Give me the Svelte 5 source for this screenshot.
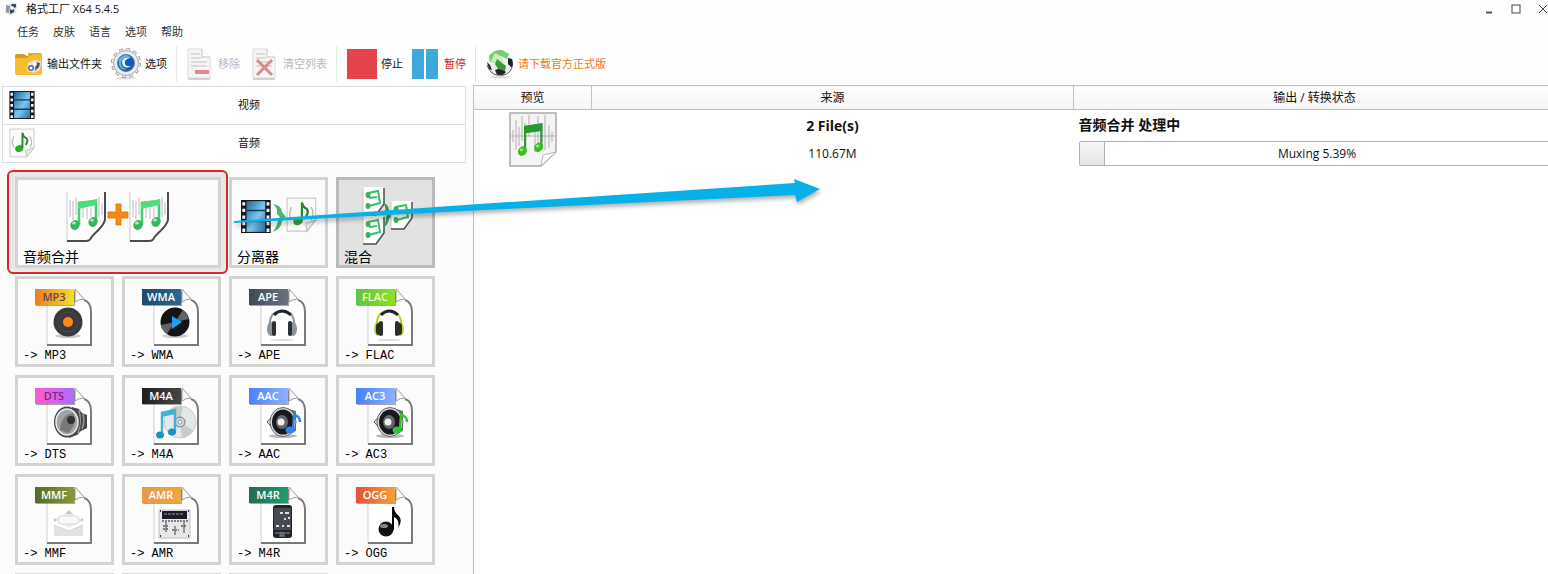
<script lang="ts">
  type Format = { name: string; from: string; to: string; ink?: string };

  const menus = ['任务', '皮肤', '语言', '选项', '帮助'];

  const formats: Format[] = [
    { name: 'MP3', from: '#f07a22', to: '#f6e024', ink: '#69405c' },
    { name: 'WMA', from: '#1c4a70', to: '#2c678f' },
    { name: 'APE', from: '#414958', to: '#68717f' },
    { name: 'FLAC', from: '#5cc646', to: '#8fe01e', ink: '#e6ffc8' },
    { name: 'DTS', from: '#ff5ccb', to: '#ad6cff', ink: '#8a1c8c' },
    { name: 'M4A', from: '#1f1f1f', to: '#464646' },
    { name: 'AAC', from: '#4582ff', to: '#8cb2ff' },
    { name: 'AC3', from: '#4582ff', to: '#8cb2ff' },
    { name: 'MMF', from: '#566a2c', to: '#869c30' },
    { name: 'AMR', from: '#e39a4a', to: '#f0a540' },
    { name: 'M4R', from: '#226b54', to: '#249a70' },
    { name: 'OGG', from: '#e5503a', to: '#f2a034' }
  ];

  let progress = 5.39;
</script>

{#snippet note(color: string, dark: string)}
  <path d="M9 23V5L27 3V20" fill="none" stroke={color} stroke-width="2.4" />
  <path d="M8 4L28 2V8L8 10Z" fill={color} />
  <ellipse cx="6" cy="24" rx="5" ry="3.6" fill={dark} transform="rotate(-20 6 24)" />
  <ellipse cx="24" cy="21" rx="5" ry="3.6" fill={dark} transform="rotate(-20 24 21)" />
  <ellipse cx="5" cy="23" rx="2" ry="1.2" fill="#fff" opacity="0.5" />
  <ellipse cx="23" cy="20" rx="2" ry="1.2" fill="#fff" opacity="0.5" />
{/snippet}

{#snippet sheet()}
  <path d="M1 0H39V31L25 51H1Z" fill="#fff" />
  <path d="M1 1V50" stroke="#c9c9c9" />
  <path d="M39 1V29C37 37 28 42 25 47C24 50 22 50 20 50H1" fill="none" stroke="#4c4c4c" stroke-width="2" />
  <path d="M4 9V26M7 10V29M10 6V24M17 17V27M21 17V28M25 17V26M33 6V26M36 12V24" stroke="#bdb6bf" />
  <path d="M13 34V12L30 10V31" fill="none" stroke="#43cd73" stroke-width="2.600" />
  <path d="M12 12L31 8V14L12 18Z" fill="#4fdc80" />
  <ellipse cx="9" cy="34" rx="4.500" ry="5" fill="#35b55f" transform="rotate(30 9 34)" />
  <ellipse cx="27" cy="31" rx="4.500" ry="5" fill="#35b55f" transform="rotate(30 27 31)" />
  <ellipse cx="8" cy="32" rx="2" ry="1.500" fill="#9ff0bb" />
  <ellipse cx="26" cy="29" rx="2" ry="1.500" fill="#9ff0bb" />
{/snippet}

{#snippet miniSheet()}
  <path d="M0 0H21V17L13 28H0Z" fill="#fff" />
  <path d="M21 1V17L13 28H0" fill="none" stroke="#4c4c4c" stroke-width="1.500" />
  <path d="M0 1V27" stroke="#c9c9c9" />
  <path d="M5 6L15 4L17 16L6 19M6 11L14 10" fill="none" stroke="#3abf67" stroke-width="2" />
  <ellipse cx="5" cy="19" rx="2.500" ry="3" fill="#35b55f" />
  <ellipse cx="5" cy="8" rx="2.500" ry="3" fill="#35b55f" />
{/snippet}

{#snippet film()}
  <rect width="27" height="30" fill="#15191e" />
  <rect x="5" y="1" width="17" height="28" fill="url(#filmBlue)" />
  <path d="M5 9.500H22M5 19.500H22" stroke="#123b5a" stroke-width="1.500" />
  <path d="M2.500 2V30M24.500 2V30" stroke="#f4f4f4" stroke-width="2.600" stroke-dasharray="3 3" />
{/snippet}

{#snippet noteSheet()}
  <path d="M1 1H27V21L19 31H1Z" fill="#fafafa" stroke="#c9c9c9" />
  <path d="M27 21L19 31L18 24Z" fill="#e9e9e9" stroke="#bdbdbd" />
  <path d="M5 9Q2 15 5 21M23 9Q26 15 23 21" fill="none" stroke="#aaa" />
  <ellipse cx="11" cy="22" rx="4.500" ry="3.500" fill="#2faa2d" transform="rotate(-20 11 22)" />
  <path d="M14.500 21V5Q15 9 19 11Q21 14 18 18" fill="none" stroke="#27842a" stroke-width="2" />
{/snippet}

{#snippet speaker(color: string)}
  <ellipse cx="35" cy="50" rx="14" ry="2" fill="#bbb" />
  <path d="M38 22L48 25V45L38 49Z" fill="#6d7277" />
  <path d="M19 36L30 24V48Z" fill="#e2e3e5" stroke="#333" stroke-width="0.800" />
  <ellipse cx="35" cy="36" rx="12" ry="13.500" fill="#17191c" stroke="#d6d8da" stroke-width="2" />
  <ellipse cx="35" cy="36" rx="13" ry="14.500" fill="none" stroke="#4a4d50" stroke-width="0.800" />
  <ellipse cx="34" cy="36" rx="6" ry="7" fill="#63676b" />
  <circle cx="33" cy="36" r="3.500" fill="#f0f0f0" />
  <path d="M45 43L46 29Q52 30 52 36" fill="none" stroke={color} stroke-width="2.400" />
  <ellipse cx="42" cy="44" rx="4.500" ry="3.500" fill={color} />
{/snippet}

{#snippet remover(clear: boolean)}
  <svg width="25" height="32" viewBox="0 0 25 32" aria-hidden="true">
    <path d="M1 1H15L23 9V30H1Z" fill="#f5f5f5" stroke="#dcdcdc" />
    <path d="M15 1V9H23" fill="#fff" stroke="#c3c3c3" />
    <path d="M4 6H13M4 10H14M4 14H20M4 18H20" stroke="#d2d2d2" stroke-width="1.500" />
    {#if clear}
      <path d="M5 12L20 27M20 12L5 27" stroke="#d98a8d" stroke-width="3" />
    {:else}
      <rect x="8" y="22" width="14" height="4" fill="#e08a8e" />
    {/if}
    <path d="M1 31H23" stroke="#aaa" />
  </svg>
{/snippet}

{#snippet art(name: string)}
  {#if name === 'MP3'}
    <ellipse cx="34" cy="49" rx="13" ry="2" fill="#ccc" />
    <circle cx="34" cy="35" r="14.500" fill="#3a3a3e" />
    <circle cx="34" cy="35" r="10" fill="none" stroke="#4b4b50" />
    <circle cx="34" cy="35" r="5" fill="#ff8a1c" />
  {:else if name === 'WMA'}
    <ellipse cx="34" cy="49" rx="13" ry="2" fill="#ccc" />
    <circle cx="34" cy="35" r="14.500" fill="#131416" />
    <path d="M34 35L42 23A14.500 14.500 0 0 1 48 32ZM34 35L26 47A14.500 14.500 0 0 1 20 38Z" fill="#8b8f94" opacity="0.650" />
    <path d="M31 29L41 35L31 42Z" fill="#1e9ff2" />
  {:else if name === 'APE' || name === 'FLAC'}
    {@const rim = name === 'APE' ? '#8d949b' : '#b7d431'}
    <ellipse cx="34" cy="53" rx="12" ry="1" fill="#ddd" />
    <path d="M22 42Q20 24 34 24Q48 24 46 42" fill="none" stroke={rim} stroke-width="2" />
    <path d="M26 28Q34 20 43 28" fill="none" stroke="#202428" stroke-width="3" />
    <ellipse cx="23" cy="42" rx="4" ry="7" fill={rim} />
    <ellipse cx="45" cy="42" rx="4" ry="7" fill={rim} />
    <rect x="24" y="34" width="4" height="15" rx="2" fill="#2b3035" />
    <rect x="40" y="34" width="4" height="15" rx="2" fill="#2b3035" />
    {#if name === 'FLAC'}
      <rect x="21" y="36" width="6" height="12" rx="3" fill="#283028" />
      <rect x="41" y="36" width="6" height="12" rx="3" fill="#283028" />
    {/if}
  {:else if name === 'DTS'}
    <path d="M38 21L45 23L48 27L53 29V42L47 45L43 49L35 52Z" fill="#45484b" />
    <path d="M45 24Q48 35 44 47M49 28Q51 36 48 43" fill="none" stroke="#999" stroke-width="1.500" />
    <ellipse cx="33" cy="36" rx="13" ry="15.500" fill="#44474a" />
    <ellipse cx="33" cy="36" rx="11" ry="13" fill="#a2a3a4" stroke="#ececec" stroke-width="1.500" />
    <path d="M26 44Q27 29 39 27Q44 38 34 47Z" fill="#77797b" />
    <circle cx="37" cy="34" r="4" fill="#303234" />
  {:else if name === 'M4A'}
    <circle cx="39" cy="36" r="16" fill="#e5e8e8" stroke="#c6caca" />
    <path d="M39 36L30 23A16 16 0 0 1 42 20ZM39 36L52 44A16 16 0 0 1 41 52Z" fill="#c8cdcc" />
    <circle cx="39" cy="36" r="5" fill="#d4d4d4" stroke="#777" />
    <circle cx="39" cy="36" r="2" fill="#fff" stroke="#999" />
    <path d="M21 48V27L34 24V45" fill="none" stroke="#3fb2d8" stroke-width="2.500" />
    <path d="M20 26L35 23V28L20 31Z" fill="#3fb2d8" />
    <ellipse cx="19" cy="49" rx="4" ry="3.500" fill="#1593c1" />
    <ellipse cx="31" cy="46" rx="4" ry="3.500" fill="#1593c1" />
  {:else if name === 'AAC'}
    {@render speaker('#2b86e8')}
  {:else if name === 'AC3'}
    {@render speaker('#31c72f')}
  {:else if name === 'MMF'}
    <path d="M20 40V51H49V40L35 46Z" fill="#e2e2e2" />
    <path d="M20 35L35 27L49 35L35 43Z" fill="#ededed" />
    <rect x="24" y="31" width="21" height="8" rx="3" fill="#f8f8f8" stroke="#d7d7d7" />
    <path d="M31 29L35 25L39 29M20 33V37L23 35ZM49 33V37L46 35Z" fill="#c5c5c5" />
    <path d="M20 40L35 46L49 40" fill="none" stroke="#d2d2d2" />
  {:else if name === 'AMR'}
    <rect x="18" y="25" width="31" height="28" fill="#e6e7e9" stroke="#c0c0c2" />
    <rect x="21" y="26" width="25" height="8" fill="#1e1926" />
    <path d="M23 29H43" stroke="#9a97a5" stroke-dasharray="3 1" />
    <path d="M25 37V47M34 41V50M43 37V48" stroke="#77797d" stroke-width="1.500" />
    <path d="M22 41H28M22 44H28M31 45H38M40 41H46M21 36H47" stroke="#5b5d62" stroke-width="1.500" stroke-dasharray="2 1" />
    <path d="M19 26H20M47 26H48M19 51H20M47 51H48" stroke="#333" stroke-width="2" />
  {:else if name === 'M4R'}
    <rect x="25" y="20" width="19" height="33" rx="3" fill="#202327" />
    <rect x="26" y="23" width="17" height="22" fill="#464b51" />
    <path d="M32 28H35M37 28H41M36 34H38M40 33H42M28 41H31M34 41H36M39 41H42" stroke="#d8dde0" stroke-width="2" />
    <path d="M27 48H42M31 51H37" stroke="#8d9195" />
    <circle cx="34" cy="49" r="2" fill="#565a60" stroke="#aaa" stroke-width="0.500" />
  {:else}
    <circle cx="31" cy="44" r="7.500" fill="#111" />
    <ellipse cx="29" cy="41" rx="4" ry="2" fill="#888" />
    <path d="M37 45V22H39Q39 27 44 31Q48 36 43 43Q45 35 39 32V45Z" fill="#080808" />
  {/if}
{/snippet}

<svg class="defs" aria-hidden="true">
  <defs>
    <linearGradient id="filmBlue" x1="0" x2="1" y1="0" y2="1">
      <stop offset="0" stop-color="#1f6898" />
      <stop offset="0.550" stop-color="#7bc7ef" />
      <stop offset="1" stop-color="#286e9e" />
    </linearGradient>
  </defs>
</svg>

<div class="window">
  <header class="titlebar">
    <svg width="14" height="14" viewBox="0 0 14 14" aria-hidden="true">
      <path d="M2 3L9 1L13 2L12 11L6 13L1 11Z" fill="#dce1e7" />
      <path d="M2 3L6 4L5 11L2 10Z" fill="#8a98a8" />
      <path d="M8 2H12V5L10 6V10L6 12V6Z" fill="#36475a" />
      <circle cx="8" cy="6" r="2" fill="#fff" />
    </svg>
    <h1>格式工厂 X64 5.4.5</h1>
    <div class="controls">
      <button aria-label="最小化"><svg width="10" height="10"><path d="M2 8.500H8" stroke="#555" stroke-width="2" /></svg></button>
      <button aria-label="最大化"><svg width="10" height="10"><rect x="1" y="1" width="8" height="8" fill="none" stroke="#444" /></svg></button>
      <button aria-label="关闭"><svg width="10" height="10"><path d="M1 1L9 9M9 1L1 9" stroke="#444" /></svg></button>
    </div>
  </header>

  <nav class="menubar">
    {#each menus as menu}
      <button>{menu}</button>
    {/each}
  </nav>

  <div class="toolbar">
    <button>
      <svg width="28" height="26" viewBox="0 0 28 26" aria-hidden="true">
        <path d="M0 5Q0 3 2 3H9L12 5H24V9H0Z" fill="#d99b1d" />
        <path d="M13 2H25Q27 2 27 4V10H13Z" fill="#eda91f" />
        <path d="M0 7H12L17 4H27V22Q27 24 25 24H2Q0 24 0 22Z" fill="#f8bd2f" />
        <path d="M13 12L19 9L26 10L25 19L19 22L12 20Z" fill="#dce3ea" />
        <path d="M21 11L25 12L24 16L20 20Z" fill="#40566b" />
        <circle cx="16" cy="17" r="3" fill="#5b7186" />
        <circle cx="16" cy="17" r="1.500" fill="#fff" />
        <circle cx="20" cy="13" r="2" fill="#fff" />
      </svg>
      输出文件夹
    </button>
    <button>
      <svg width="30" height="32" viewBox="0 0 30 32" aria-hidden="true">
        <ellipse cx="15" cy="30" rx="10" ry="1.500" fill="#ddd" />
        <circle cx="15" cy="15" r="13.500" fill="none" stroke="#8b939b" stroke-width="3" stroke-dasharray="3.500 3.570" />
        <circle cx="15" cy="15" r="12.500" fill="#e9ecef" stroke="#a4abb2" />
        <circle cx="15" cy="15" r="13.500" fill="none" stroke="#e9ecef" stroke-width="1.500" stroke-dasharray="2.500 4.570" stroke-dashoffset="-0.500" />
        <circle cx="15" cy="15" r="8.500" fill="#1658b4" stroke="#5f7896" />
        <path d="M20 10Q11 8 10 15Q10 20 16 21Q10 23 8 17Q6 9 14 7Q18 7 20 10Z" fill="#62b6f2" />
        <path d="M19 10Q13 11 14 16Q15 19 20 18Q16 21 12 18Q9 12 14 10Q17 9 19 10Z" fill="#e4f5ff" />
      </svg>
      选项
    </button>
    <span class="divider"></span>
    <button disabled>{@render remover(false)}移除</button>
    <button class="clear" disabled>{@render remover(true)}清空列表</button>
    <span class="divider"></span>
    <button>
      <svg width="30" height="30" aria-hidden="true"><rect width="30" height="30" fill="#e6444a" /></svg>
      停止
    </button>
    <button class="pause">
      <svg width="26" height="30" aria-hidden="true"><path d="M0 0H12V30H0ZM14 0H26V30H14Z" fill="#3fa9df" /></svg>
      暂停
    </button>
    <span class="divider"></span>
    <a class="download" href="#download">
      <svg width="28" height="30" viewBox="0 0 28 30" aria-hidden="true">
        <ellipse cx="14" cy="28" rx="10" ry="1.500" fill="#ddd" />
        <circle cx="14" cy="14" r="13" fill="#eef1ee" />
        <path d="M3 7Q8 0 16 1L23 5L21 10L15 7L11 14L4 13Z" fill="#7ccb76" />
        <path d="M9 4L16 8L18 14L13 18L8 13L4 14Z" fill="#c9ecc2" />
        <path d="M1 13L4 16L6 21L3 20ZM22 9L26 10Q28 15 26 19L22 15ZM9 21L15 19L20 23L17 26L11 26Z" fill="#20251f" />
        <path d="M11 10L16 14L20 17L19 22L12 20L9 15Z" fill="#3d9a3c" />
        <path d="M1 16Q4 25 11 26Q22 28 26 19" fill="none" stroke="#56605a" />
      </svg>
      请下载官方正式版
    </a>
  </div>

  <div class="body">
    <aside>
      <button class="category">
        <svg width="26" height="28" viewBox="0 0 27 30" aria-hidden="true">{@render film()}</svg>
        <span>视频</span>
      </button>
      <button class="category">
        <svg width="26" height="30" viewBox="0 0 28 32" aria-hidden="true">{@render noteSheet()}</svg>
        <span>音频</span>
      </button>

      <div class="tiles">
        <button class="tile wide">
          <svg width="104" height="77" viewBox="0 0 104 77" aria-hidden="true">
            <g transform="translate(0 11)">{@render sheet()}</g>
            <path d="M50 24H55V32H62V38H55V45H50V38H42V32H50Z" fill="#f78b12" stroke="#d8730d" stroke-width="0.800" />
            <g transform="translate(63 11)">{@render sheet()}</g>
          </svg>
          <span class="label">音频合并</span>
        </button>
        <button class="tile">
          <svg width="80" height="77" viewBox="0 0 80 77" aria-hidden="true">
            <g transform="translate(2 20) scale(1.1)">{@render film()}</g>
            <path d="M34 24Q42 25 43 32L47 37L43 41Q42 49 34 52Q39 44 39 40L41 37L38 34Q39 28 34 24Z" fill="#45b86b" />
            <g transform="translate(47 17) scale(1.1)">{@render noteSheet()}</g>
          </svg>
          <span class="label">分离器</span>
        </button>
        <button class="tile selected">
          <svg width="60" height="77" viewBox="0 0 60 77" aria-hidden="true">
            <g transform="translate(7 7)">{@render miniSheet()}</g>
            <g transform="translate(7 36)">{@render miniSheet()}</g>
            <path d="M27 22Q33 25 33 31L36 35L33 39Q32 45 27 48Q30 42 30 38L31 35L29 32Q30 26 27 22Z" fill="#2c9c55" />
            <g transform="translate(35 21)">{@render miniSheet()}</g>
          </svg>
          <span class="label">混合</span>
        </button>

        {#each formats as format}
          <button class="tile">
            <svg width="62" height="77" viewBox="0 -8 62 77" aria-hidden="true">
              <defs>
                <linearGradient id="badge-{format.name}">
                  <stop offset="0" stop-color={format.from} />
                  <stop offset="1" stop-color={format.to} />
                </linearGradient>
              </defs>
              <path d="M13 17V58H57V24Q57 14 49 12L41 1L39 13Z" fill="#fff" />
              <path d="M13 18V58" stroke="#d0d0d0" />
              <path d="M41 2V15Q45 12 50 12Z" fill="#f9f9f9" stroke="#9a9a9a" />
              <path d="M13 58H57V25Q57 15 50 13" fill="none" stroke="#7a7a7a" stroke-width="2" />
              <rect x="2" y="4" width="39" height="15" fill="#000" opacity="0.350" />
              <rect x="1" y="2" width="39" height="16" fill="url(#badge-{format.name})" />
              <text x="20" y="14" text-anchor="middle" fill={format.ink ?? '#fff'}>{format.name}</text>
              {@render art(format.name)}
            </svg>
            <span class="label mono">-&gt; {format.name}</span>
          </button>
        {/each}

        {#each ['WAV', 'MPC', 'AIFF'] as name}
          <button class="tile" aria-label={name}></button>
        {/each}
      </div>
    </aside>

    <main>
      <table>
        <thead>
          <tr><th class="preview">预览</th><th>来源</th><th>输出 / 转换状态</th></tr>
        </thead>
        <tbody>
          <tr>
            <td>
              <svg width="48" height="56" viewBox="0 0 48 56" aria-hidden="true">
                <path d="M1 1H47V40L32 54H1Z" fill="#f4f4f4" stroke="#a9a9a9" stroke-width="1.500" />
                <path d="M47 40L32 54L34 43Z" fill="#fff" stroke="#b5b5b5" />
                <path d="M4 18V30M7 8V38M10 15V34M13 4V29M16 11V43M20 3V24M26 15V40M29 4V38M33 11V30M36 3V38M40 13V36M43 20V30M1 24H46" stroke="#b0b0b0" />
                <g transform="translate(8 9) scale(0.9 1.250)">{@render note('#279a2d', '#3bbd1d')}</g>
              </svg>
            </td>
            <td><strong>2 File(s)</strong><p>110.67M</p></td>
            <td class="status">
              <strong>音频合并 处理中</strong>
              <div class="progress" role="progressbar" aria-label="Muxing" aria-valuenow={progress} aria-valuemin="0" aria-valuemax="100">
                <div class="fill" style="width: {progress}%"></div>
                <span>Muxing {progress}%</span>
              </div>
            </td>
          </tr>
        </tbody>
      </table>
    </main>
  </div>

  <svg class="arrow" width="600" height="60" viewBox="0 0 600 60" aria-hidden="true">
    <path d="M4 51L235 35L565 13L564 9L590 19L567 32L565 25L235 41L4 53Z" fill="#08b0e8" />
  </svg>
</div>

<style>
  :global(body) {
    margin: 0;
  }

  .window {
    position: relative;
    display: flex;
    flex-direction: column;
    height: 100vh;
    overflow: hidden;
    background: #fefefe;
    color: #111;
    font-family: "Open Sans", "Noto Sans CJK SC", sans-serif;
    font-size: 11px;
    line-height: 16px;
  }

  .defs {
    position: absolute;
    width: 0;
    height: 0;
  }

  button {
    padding: 0;
    border: 0;
    background: none;
    color: inherit;
    font: inherit;
  }

  svg {
    display: block;
    flex: none;
  }

  .titlebar {
    display: flex;
    flex: none;
    align-items: center;
    gap: 8px;
    height: 18px;
    padding-left: 4px;
  }

  h1 {
    margin: 0;
    font-size: 11px;
    font-weight: 400;
  }

  .controls {
    display: flex;
    gap: 17px;
    margin-left: auto;
  }

  .menubar {
    display: flex;
    flex: none;
    align-items: center;
    gap: 14px;
    height: 27px;
    padding-left: 17px;
    color: #333;
  }

  .toolbar {
    display: flex;
    flex: none;
    align-items: center;
    gap: 9px;
    height: 38px;
    padding: 0 0 2px 15px;
  }

  .toolbar button,
  .toolbar a {
    display: flex;
    align-items: center;
    gap: 4px;
    white-space: nowrap;
  }

  .toolbar .clear {
    margin-left: 3px;
  }

  .toolbar button:disabled {
    gap: 6px;
    color: #b8b8b8;
  }

  .toolbar .pause {
    gap: 6px;
    color: #c8281e;
  }

  .toolbar .download {
    color: #f07818;
    text-decoration: none;
  }

  .divider {
    width: 1px;
    height: 36px;
    margin-right: 1px;
    background: #e6e6e6;
  }

  .body {
    display: flex;
    flex: 1;
    min-height: 0;
  }

  aside {
    flex: none;
    box-sizing: border-box;
    width: 473px;
    padding: 1px 7px 0 2px;
    overflow: hidden;
    background: #fcfcfc;
  }

  .category {
    display: flex;
    align-items: center;
    box-sizing: border-box;
    width: 100%;
    height: 39px;
    margin-bottom: -1px;
    padding: 0 2px 2px 6px;
    border: 1px solid #dedede;
    background: #fff;
  }

  .category span {
    flex: 1;
    text-align: center;
  }

  .tiles {
    display: grid;
    grid-template-columns: repeat(4, 1fr);
    grid-auto-rows: 91px;
    gap: 8px;
    padding: 15px 31px 0 13px;
  }

  .tile {
    position: relative;
    display: flex;
    flex-direction: column;
    align-items: center;
    border: 3px solid #d3d3d3;
    background: #fbfbfb;
  }

  .tile svg {
    margin-bottom: -9px;
  }

  .tile text {
    font: 600 11px "Open Sans", sans-serif;
  }

  .wide {
    grid-column: span 2;
    box-shadow: 0 0 0 6px #ebe7e9;
  }

  .wide::after {
    content: "";
    position: absolute;
    inset: -10px -10px -9px -11px;
    border: 2px solid #dc2630;
    border-radius: 6px;
  }

  .selected {
    border-color: #bababa;
    background: #e2e2e2;
  }

  .label {
    align-self: flex-start;
    padding-left: 5px;
    color: #000;
    font-family: "Liberation Sans", "Noto Sans CJK SC", sans-serif;
    font-size: 14px;
    line-height: 18px;
  }

  .mono {
    font-family: "Liberation Mono", monospace;
    font-size: 12px;
  }

  main {
    flex: 1;
    min-width: 0;
    overflow: hidden;
    border-left: 1px solid #bfc2c4;
    background: #fff;
  }

  table {
    width: calc(100% + 8px);
    table-layout: fixed;
    border-collapse: collapse;
    font-size: 12px;
    text-align: center;
  }

  th {
    height: 22px;
    padding: 1px 0 0;
    border: solid #bfc2c4;
    border-width: 1px 1px 1px 0;
    background: linear-gradient(#fff, #f4f4f4);
    font-weight: 400;
  }

  .preview {
    width: 117px;
  }

  td {
    padding: 2px 0 0;
    vertical-align: top;
  }

  td svg {
    margin: 0 auto;
  }

  strong {
    display: block;
    font-size: 14px;
    line-height: 28px;
  }

  td p {
    margin: 0;
    line-height: 28px;
  }

  .status {
    padding-left: 5px;
    text-align: left;
  }

  .status strong {
    line-height: 26px;
  }

  .progress {
    position: relative;
    box-sizing: border-box;
    height: 25px;
    margin-top: 3px;
    border: 1px solid #b2b2b2;
    border-radius: 2px;
    line-height: 23px;
    text-align: center;
  }

  .fill {
    position: absolute;
    inset: 0 auto 0 0;
    box-sizing: border-box;
    border-right: 1px solid #b2b2b2;
    background: linear-gradient(#f8f8f8, #e4e4e4);
  }

  .arrow {
    position: absolute;
    top: 170px;
    left: 230px;
    pointer-events: none;
    filter: drop-shadow(1px 3px 2px rgba(0, 0, 0, 0.3));
  }
</style>
